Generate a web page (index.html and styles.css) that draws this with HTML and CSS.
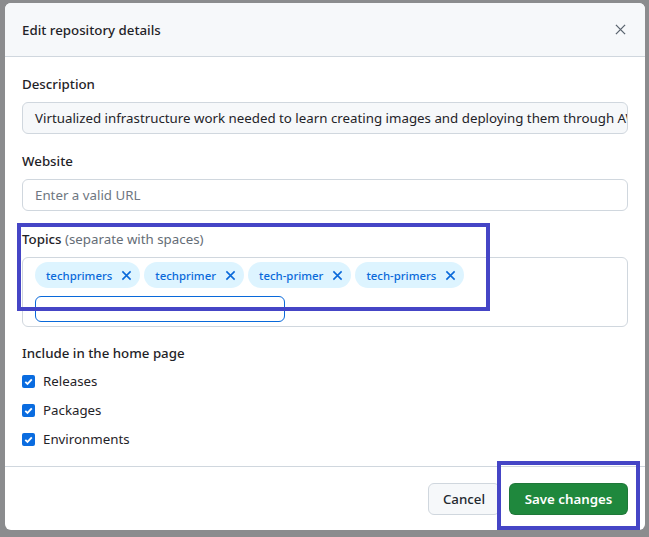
FILE: index.html
```html
<!DOCTYPE html>
<html>
<head>
<meta charset="utf-8">
<link rel="stylesheet" href="styles.css">
</head>
<body>
<div class="backdrop">
  <div class="dialog">
    <div class="dialog-header">
      <h1 class="dialog-title">Edit repository details</h1>
      <svg class="close-icon" viewBox="0 0 12 12" width="12" height="12"><path d="M1 1L11 11M11 1L1 11"/></svg>
    </div>
    <div class="dialog-body">
      <div class="field">
        <label class="field-label">Description</label>
        <div class="input input-muted">Virtualized infrastructure work needed to learn creating images and deploying them through AWS and other clouds</div>
      </div>
      <div class="field">
        <label class="field-label">Website</label>
        <div class="input placeholder">Enter a valid URL</div>
      </div>
      <div class="field field-topics">
        <label class="field-label">Topics <span class="hint">(separate with spaces)</span></label>
        <div class="topics-box">
          <span class="chip">techprimers <svg class="chip-x" viewBox="0 0 12 12" width="12" height="12"><path d="M1.5 1.5L10.5 10.5M10.5 1.5L1.5 10.5"/></svg></span>
          <span class="chip">techprimer <svg class="chip-x" viewBox="0 0 12 12" width="12" height="12"><path d="M1.5 1.5L10.5 10.5M10.5 1.5L1.5 10.5"/></svg></span>
          <span class="chip">tech-primer <svg class="chip-x" viewBox="0 0 12 12" width="12" height="12"><path d="M1.5 1.5L10.5 10.5M10.5 1.5L1.5 10.5"/></svg></span>
          <span class="chip">tech-primers <svg class="chip-x" viewBox="0 0 12 12" width="12" height="12"><path d="M1.5 1.5L10.5 10.5M10.5 1.5L1.5 10.5"/></svg></span>
          <div class="topic-input"></div>
        </div>
        <div class="annotation annotation-topics"></div>
      </div>
      <div class="field">
        <label class="field-label">Include in the home page</label>
        <div class="checks">
          <div class="check-row"><span class="checkbox"><svg viewBox="0 0 12 12" width="11" height="11"><path d="M2.5 6.3L4.9 8.7L9.6 3.6"/></svg></span>Releases</div>
          <div class="check-row"><span class="checkbox"><svg viewBox="0 0 12 12" width="11" height="11"><path d="M2.5 6.3L4.9 8.7L9.6 3.6"/></svg></span>Packages</div>
          <div class="check-row"><span class="checkbox"><svg viewBox="0 0 12 12" width="11" height="11"><path d="M2.5 6.3L4.9 8.7L9.6 3.6"/></svg></span>Environments</div>
        </div>
      </div>
    </div>
    <div class="dialog-footer">
      <button class="btn btn-default">Cancel</button>
      <button class="btn btn-primary">Save changes</button>
      <div class="annotation annotation-save"></div>
    </div>
  </div>
</div>
</body>
</html>
```
FILE: styles.css
```css
* { box-sizing: border-box; }
html, body { margin: 0; padding: 0; }
body {
  width: 649px;
  height: 537px;
  overflow: hidden;
  background: #8b8c8e;
  font-family: "Noto Sans", "Open Sans", sans-serif;
  color: #1f2328;
}
.backdrop {
  padding: 3px 4px 0 5px;
}
.dialog {
  width: 640px;
  height: 527px;
  background: #ffffff;
  border-radius: 6px;
  display: flex;
  flex-direction: column;
  position: relative;
}
.dialog-header {
  height: 54px;
  background: #f6f8fa;
  border-bottom: 1px solid #d0d7de;
  border-radius: 6px 6px 0 0;
  display: flex;
  align-items: center;
  justify-content: space-between;
  padding: 0 19px 0 17px;
}
.dialog-title {
  margin: 0;
  font-size: 13.3px;
  font-weight: 500;
  color: #1f2328;
}
.close-icon {
  fill: none;
  stroke: #59636e;
  stroke-width: 1.4;
  width: 11px;
  height: 11px;
}
.dialog-body {
  padding: 17px 17px 0 17px;
  flex: 1;
  display: flex;
  flex-direction: column;
  gap: 17px;
}
.field { display: flex; flex-direction: column; position: relative; }
.field-topics { margin-top: 1px; margin-bottom: -1px; }
.field-label {
  font-size: 13.3px;
  font-weight: 500;
  line-height: 20px;
  margin-bottom: 8px;
  color: #1f2328;
}
.hint { font-weight: 400; color: #656d76; }
.input {
  height: 32px;
  border: 1px solid #d0d7de;
  border-radius: 6px;
  padding: 0 12px;
  font-size: 13.3px;
  line-height: 30px;
  white-space: nowrap;
  overflow: hidden;
  color: #1f2328;
  background: #ffffff;
}
.input-muted { background: #f6f8fa; }
.placeholder { color: #6e7781; }
.topics-box {
  height: 70px;
  border: 1px solid #d0d7de;
  border-radius: 6px;
  padding: 4px 12px;
  display: flex;
  flex-wrap: wrap;
  align-content: flex-start;
  gap: 8px 4px;
}
.chip {
  height: 26px;
  display: inline-flex;
  align-items: center;
  gap: 9px;
  padding: 0 8px 0 11px;
  border-radius: 13px;
  background: #ddf4ff;
  color: #0969da;
  font-size: 11.4px;
  font-weight: 500;
}
.chip-x {
  fill: none;
  stroke: #0969da;
  stroke-width: 1.7;
  width: 11px;
  height: 11px;
}
.topic-input {
  height: 26px;
  border: 1px solid #0969da;
  border-radius: 6px;
  flex: 0 0 250px;
}
.checks { display: flex; flex-direction: column; gap: 9px; }
.check-row {
  display: flex;
  align-items: center;
  gap: 8px;
  font-size: 13.3px;
  line-height: 20px;
  color: #1f2328;
}
.checkbox {
  width: 13px;
  height: 13px;
  border-radius: 2px;
  background: #0a6ce0;
  display: inline-flex;
  align-items: center;
  justify-content: center;
}
.checkbox svg { fill: none; stroke: #fff; stroke-width: 2; }
.dialog-footer {
  border-top: 1px solid #d0d7de;
  padding: 16px 17px 15px 17px;
  display: flex;
  justify-content: flex-end;
  gap: 9px;
  position: relative;
}
.btn {
  height: 32px;
  border-radius: 6px;
  font-family: inherit;
  font-size: 13.3px;
  padding: 0;
  white-space: nowrap;
  cursor: pointer;
}
.btn-default {
  background: #f6f8fa;
  border: 1px solid #d0d7de;
  color: #24292f;
  font-weight: 500;
  width: 72px;
}
.btn-primary {
  background: #1f883d;
  border: 1px solid rgba(31,35,40,0.15);
  color: #ffffff;
  font-weight: 600;
  width: 119px;
}
.annotation {
  position: absolute;
  border: 4px solid #4545c6;
  pointer-events: none;
}
.annotation-topics {
  left: -5px;
  top: -6px;
  width: 473px;
  height: 88px;
}
.annotation-save {
  right: 5px;
  top: -6px;
  width: 143px;
  height: 69px;
}
```
